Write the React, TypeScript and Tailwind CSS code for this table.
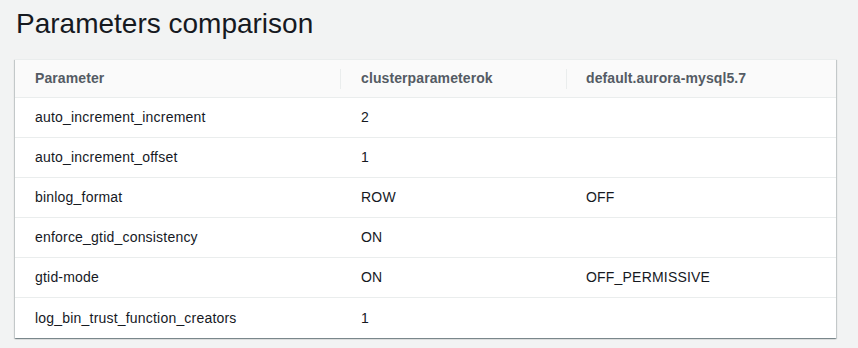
const ROWS: [string, string, string][] = [
  ['auto_increment_increment', '2', ''],
  ['auto_increment_offset', '1', ''],
  ['binlog_format', 'ROW', 'OFF'],
  ['enforce_gtid_consistency', 'ON', ''],
  ['gtid-mode', 'ON', 'OFF_PERMISSIVE'],
  ['log_bin_trust_function_creators', '1', ''],
];

export default function App() {
  return (
    <div className="w-[858px] h-[348px] bg-[#f2f3f3] pl-[15px] pr-[22px] pt-[6px] font-['Liberation_Sans',Arial,sans-serif]">
      <h1 className="text-[28px] leading-[36px] text-[#16191f] pl-px">Parameters comparison</h1>
      <div className="mt-[17px] bg-white shadow-[0_1px_1px_0_rgba(0,28,36,0.3),1px_1px_1px_0_rgba(0,28,36,0.15),-1px_1px_1px_0_rgba(0,28,36,0.15)] border-t border-[#eaeded]">
        <div className="grid grid-cols-[325px_226px_1fr] h-[38px] items-center bg-[#fafafa] border-b border-[#eaeded] text-[14px] font-bold text-[#545b64] tracking-[0.1px]">
          <div className="pl-[20px]">Parameter</div>
          <div className="flex items-center">
            <span className="w-px h-[20px] bg-[#eaeded]" />
            <span className="pl-[20px]">clusterparameterok</span>
          </div>
          <div className="flex items-center">
            <span className="w-px h-[20px] bg-[#eaeded]" />
            <span className="pl-[19px]">default.aurora-mysql5.7</span>
          </div>
        </div>
        {ROWS.map(([name, a, b], i) => (
          <div
            key={name}
            className={
              'grid grid-cols-[325px_226px_1fr] h-[40px] items-center text-[14px] text-[#16191f] tracking-[0.2px] ' +
              (i < ROWS.length - 1 ? 'border-b border-[#eaeded]' : '')
            }
          >
            <div className="pl-[20px]">{name}</div>
            <div className="pl-[21px]">{a}</div>
            <div className="pl-[20px]">{b}</div>
          </div>
        ))}
      </div>
    </div>
  );
}
